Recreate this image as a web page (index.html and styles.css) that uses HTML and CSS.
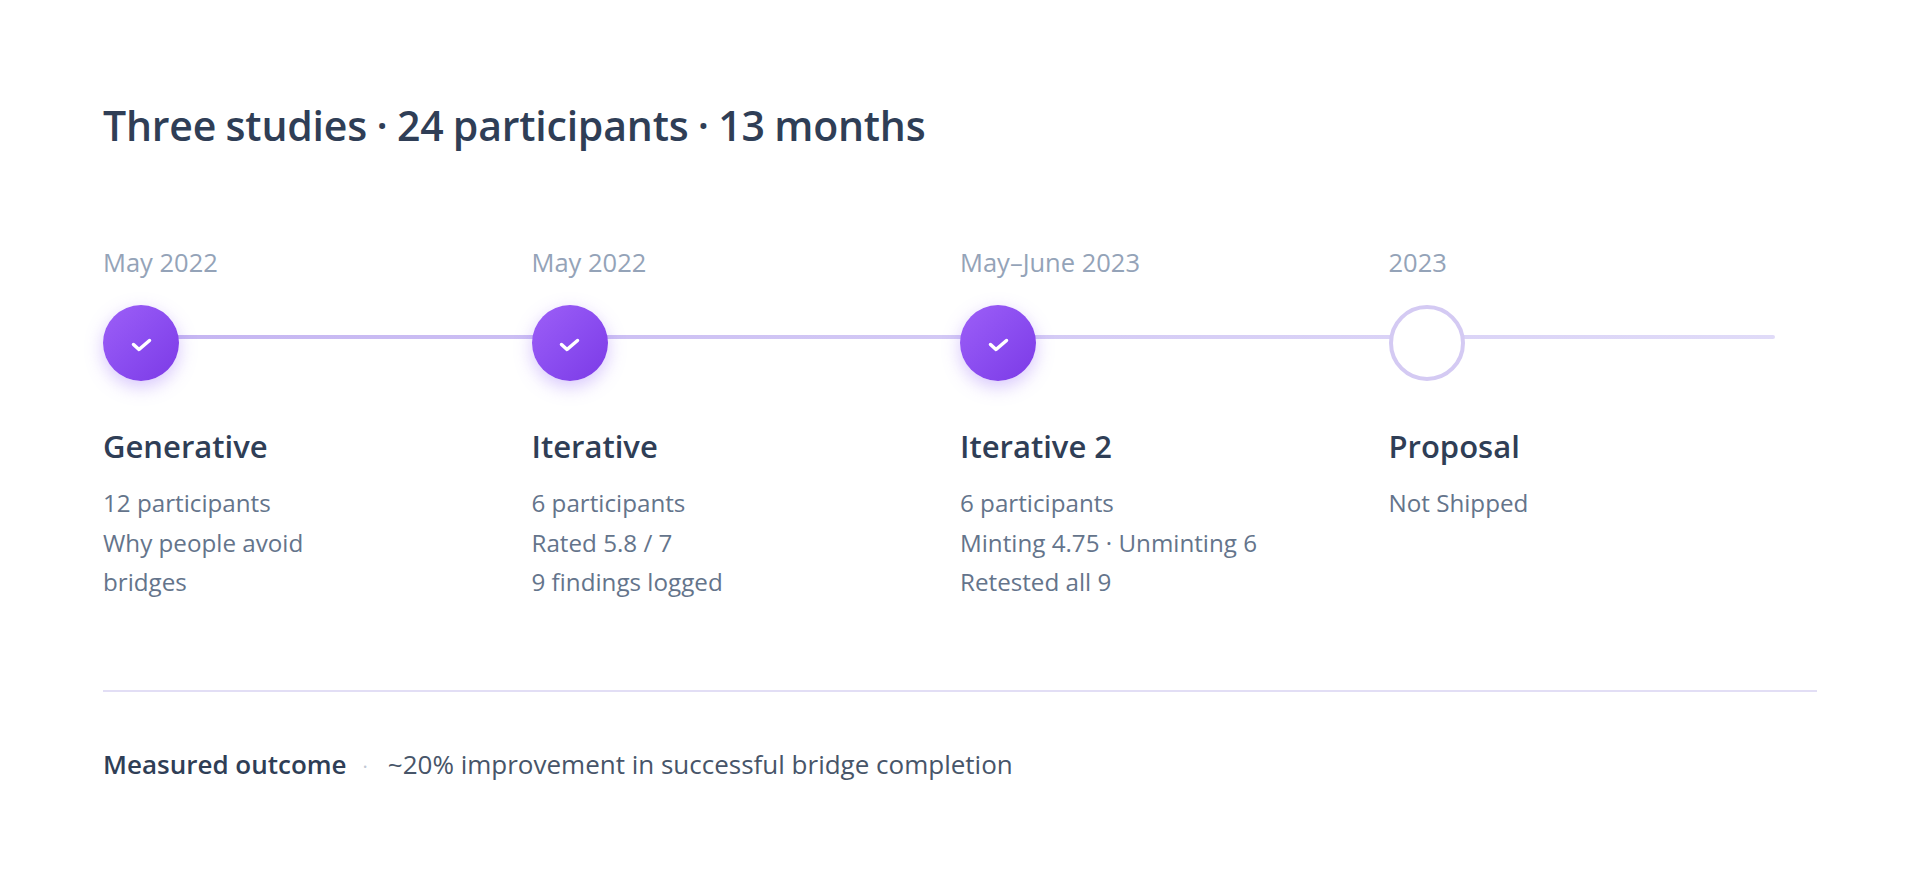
FILE: index.html
```html
<!DOCTYPE html>
<html lang="en">
<head>
<meta charset="utf-8">
<title>Research timeline</title>
<link rel="stylesheet" href="styles.css">
</head>
<body>
<main class="page">
  <h1 class="title">Three studies · 24 participants · 13 months</h1>

  <section class="timeline">
    <div class="track"></div>

    <div class="step">
      <div class="date">May 2022</div>
      <div class="node done">
        <svg class="check" viewBox="0 0 21 14" width="21" height="14"><path d="M2.5 6.5 L8 11.5 L18.5 2.5" fill="none" stroke="#fff" stroke-width="3.5" stroke-linecap="round" stroke-linejoin="round"/></svg>
      </div>
      <h2 class="name">Generative</h2>
      <ul class="facts">
        <li>12 participants</li>
        <li class="desc">Why people avoid bridges</li>
      </ul>
    </div>

    <div class="step">
      <div class="date">May 2022</div>
      <div class="node done">
        <svg class="check" viewBox="0 0 21 14" width="21" height="14"><path d="M2.5 6.5 L8 11.5 L18.5 2.5" fill="none" stroke="#fff" stroke-width="3.5" stroke-linecap="round" stroke-linejoin="round"/></svg>
      </div>
      <h2 class="name">Iterative</h2>
      <ul class="facts">
        <li>6 participants</li>
        <li>Rated 5.8 / 7</li>
        <li>9 findings logged</li>
      </ul>
    </div>

    <div class="step">
      <div class="date">May–June 2023</div>
      <div class="node done">
        <svg class="check" viewBox="0 0 21 14" width="21" height="14"><path d="M2.5 6.5 L8 11.5 L18.5 2.5" fill="none" stroke="#fff" stroke-width="3.5" stroke-linecap="round" stroke-linejoin="round"/></svg>
      </div>
      <h2 class="name">Iterative 2</h2>
      <ul class="facts">
        <li>6 participants</li>
        <li>Minting 4.75 · Unminting 6</li>
        <li>Retested all 9</li>
      </ul>
    </div>

    <div class="step">
      <div class="date">2023</div>
      <div class="node pending"></div>
      <h2 class="name">Proposal</h2>
      <ul class="facts">
        <li>Not Shipped</li>
      </ul>
    </div>
  </section>

  <footer class="outcome">
    <span class="outcome-label">Measured outcome</span>
    <span class="outcome-sep">·</span>
    <span class="outcome-text">~20% improvement in successful bridge completion</span>
  </footer>
</main>
</body>
</html>
```

FILE: styles.css
```css
* { box-sizing: border-box; }

html, body {
  margin: 0;
  padding: 0;
  background: #ffffff;
}

body {
  font-family: "Open Sans", "Noto Sans", "Liberation Sans", sans-serif;
  color: #334155;
}

.page {
  padding: 97px 103px 0;
}

.title {
  margin: 0;
  font-size: 41px;
  line-height: 56px;
  font-weight: 600;
  color: #2f3e56;
  letter-spacing: -0.2px;
  word-spacing: -1px;
}

.timeline {
  position: relative;
  margin-top: 93px;
  display: grid;
  grid-template-columns: repeat(4, 1fr);
}

.track {
  position: absolute;
  top: 89px;
  left: 38px;
  right: 42px;
  height: 4px;
  border-radius: 2px;
  background: linear-gradient(90deg, #c5b5f2 0%, #d3c9f5 50%, #e0dbf8 100%);
}

.step {
  position: relative;
  display: flex;
  flex-direction: column;
  align-items: flex-start;
}

.date {
  font-size: 25.5px;
  line-height: 32px;
  color: #94a3b8;
}

.node {
  position: relative;
  z-index: 1;
  margin-top: 27px;
  width: 76px;
  height: 76px;
  border-radius: 50%;
  display: flex;
  align-items: center;
  justify-content: center;
}

.node.done {
  background: linear-gradient(135deg, #9d5ff7 0%, #8b4df0 50%, #7c3ae6 100%);
  box-shadow: 0 6px 18px rgba(139, 92, 246, 0.35);
}

.node.pending {
  background: #ffffff;
  border: 4px solid #d4caf3;
}

.check {
  display: block;
  margin-top: 3px;
}

.name {
  margin: 45px 0 0;
  font-size: 31px;
  line-height: 40px;
  font-weight: 600;
  color: #2f3e56;
}

.facts {
  list-style: none;
  margin: 17px 0 0;
  padding: 0;
  font-size: 24.2px;
  line-height: 39.5px;
  color: #64748b;
}

.facts li {
  white-space: nowrap;
}

.facts .desc {
  white-space: normal;
  max-width: 250px;
}

.outcome {
  margin-top: 88px;
  border-top: 2px solid #e2def5;
  padding-top: 55px;
  display: flex;
  align-items: baseline;
  font-size: 26px;
  line-height: 34px;
}

.outcome-label {
  font-weight: 600;
  color: #2f3e56;
}

.outcome-sep {
  margin: 0 20px 0 16px;
  color: #c0c8d4;
  font-size: 20px;
}

.outcome-text {
  color: #475569;
}
```
